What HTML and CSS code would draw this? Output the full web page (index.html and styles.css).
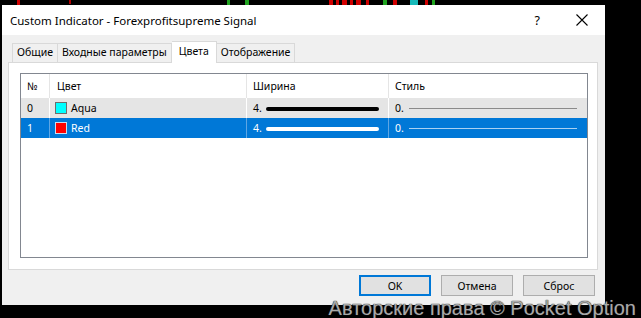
FILE: index.html
```html
<!DOCTYPE html>
<html lang="ru">
<head>
    <meta charset="UTF-8">
    <title>Custom Indicator - Forexprofitsupreme Signal</title>
    <link rel="stylesheet" href="styles.css">
</head>
<body>

    <div class="chart">
        <svg width="641" height="5" viewBox="0 0 641 5">
            <rect x="17" y="0" width="3" height="5" fill="#d00000"/>
            <rect x="69" y="0" width="2" height="4" fill="#b00000"/>
            <rect x="227" y="0" width="3" height="5" fill="#1fa31f"/>
            <rect x="245" y="0" width="4" height="5" fill="#1fa31f"/>
            <rect x="329" y="0" width="4" height="5" fill="#d00000"/>
            <rect x="336" y="0" width="3" height="5" fill="#d00000"/>
            <rect x="342" y="0" width="5" height="5" fill="#d00000"/>
            <rect x="350" y="0" width="3" height="5" fill="#d00000"/>
            <rect x="356" y="0" width="5" height="5" fill="#d00000"/>
            <rect x="366" y="0" width="3" height="5" fill="#d00000"/>
            <rect x="383" y="0" width="4" height="5" fill="#1fa31f"/>
            <rect x="393" y="0" width="4" height="5" fill="#d00000"/>
            <rect x="410" y="0" width="8" height="5" fill="#16b9b9"/>
            <rect x="425" y="0" width="3" height="5" fill="#d00000"/>
            <rect x="432" y="0" width="3" height="5" fill="#1fa31f"/>
        </svg>
    </div>

    <div class="desk">
        <div class="dialog">
            <div class="titlebar">
                <span class="title">Custom Indicator - Forexprofitsupreme Signal</span>
                <span class="help">?</span>
                <span class="close">
                    <svg width="12" height="12" viewBox="0 0 12 12">
                        <path d="M0.5 0.5 L11.5 11.5 M11.5 0.5 L0.5 11.5" stroke="#000" stroke-width="1.1" fill="none"/>
                    </svg>
                </span>
            </div>

            <div class="tabs">
                <div class="tab">Общие</div>
                <div class="tab">Входные параметры</div>
                <div class="tab active">Цвета</div>
                <div class="tab">Отображение</div>
            </div>

            <div class="panel">
                <div class="list">
                    <div class="row head">
                        <div class="cell">№</div>
                        <div class="cell">Цвет</div>
                        <div class="cell">Ширина</div>
                        <div class="cell">Стиль</div>
                    </div>
                    <div class="row hot">
                        <div class="cell">0</div>
                        <div class="cell"><span class="swatch aqua"></span>Aqua</div>
                        <div class="cell">4.<span class="thick"></span></div>
                        <div class="cell">0.<span class="thin"></span></div>
                    </div>
                    <div class="row selected">
                        <div class="cell">1</div>
                        <div class="cell"><span class="swatch red"></span>Red</div>
                        <div class="cell">4.<span class="thick"></span></div>
                        <div class="cell">0.<span class="thin"></span></div>
                    </div>
                </div>
            </div>

            <div class="buttons">
                <button type="button" class="default">OK</button>
                <button type="button">Отмена</button>
                <button type="button">Сброс</button>
            </div>
        </div>
    </div>

    <div class="watermark">Авторские права © Pocket Option</div>

</body>
</html>
```

FILE: styles.css
```css
* {
    box-sizing: border-box;
}

body {
    margin: 0;
    width: 641px;
    height: 318px;
    background-color: #000;
    font-family: 'Noto Sans', 'Open Sans', sans-serif;
    font-size: 10.5px;
    color: #000;
    position: relative;
    overflow: hidden;
}

.chart {
    height: 5px;
}

.chart svg {
    display: block;
}

.desk {
    padding-left: 2px;
}

.dialog {
    width: 603px;
    height: 300px;
    background-color: #f0f0f0;
    display: flex;
    flex-direction: column;
}

.titlebar {
    height: 30px;
    flex: none;
    background-color: #fff;
    display: flex;
    align-items: center;
    padding-left: 8px;
}

.title {
    flex: 1;
    font-size: 11.5px;
}

.help {
    font-size: 12.5px;
    margin-right: 36px;
}

.close {
    display: flex;
    margin-right: 17px;
}

.tabs {
    display: flex;
    flex: none;
    align-items: flex-end;
    height: 21px;
    margin-top: 6px;
    padding-left: 10px;
}

.tab {
    height: 19px;
    line-height: 17px;
    padding: 0 4px;
    border: 1px solid #d9d9d9;
    border-bottom: none;
    border-left: none;
    background-color: #f0f0f0;
    white-space: nowrap;
}

.tab:first-child {
    border-left: 1px solid #d9d9d9;
}

.tab.active {
    height: 22px;
    line-height: 18px;
    padding: 0 7px;
    background-color: #fff;
    margin-bottom: -1px;
    position: relative;
}

.panel {
    margin: 0 7px 0 6px;
    height: 208px;
    flex: none;
    background-color: #fff;
    border: 1px solid #d9d9d9;
    padding: 10px 9px 0 11px;
}

.list {
    height: 185px;
    border: 1px solid #828790;
    background-color: #fff;
}

.row {
    display: grid;
    grid-template-columns: 29px 197px 142px 1fr;
    height: 20px;
}

.cell {
    display: flex;
    align-items: center;
    padding-left: 6px;
    border-right: 1px solid #fff;
    white-space: nowrap;
}

.cell:last-child {
    border-right: none;
}

.row.head {
    height: 24px;
}

.row.head .cell {
    border-right-color: #e5e5e5;
}

.row.hot {
    background-color: #e5e5e5;
}

.row.selected {
    background-color: #0078d7;
    color: #fff;
}

.row.selected .cell {
    border-right-color: #5ea6e4;
}

.row .cell:nth-child(2) {
    padding-left: 5px;
}

.row.head .cell:nth-child(2) {
    padding-left: 7px;
}

.swatch {
    width: 12px;
    height: 12px;
    margin-right: 4px;
    border: 1px solid #6d6d6d;
}

.swatch.aqua {
    background-color: #00ffff;
}

.swatch.red {
    background-color: #ff0000;
    border-color: #c8dcf0;
}

.thick {
    flex: 1;
    height: 4px;
    border-radius: 2px;
    background-color: #000;
    margin: 1px 9px 0 4px;
}

.selected .thick {
    background-color: #fff;
}

.thin {
    flex: 1;
    height: 1px;
    background-color: #8a8a8a;
    margin: 1px 10px 0 5px;
}

.selected .thin {
    background-color: #a9d1f2;
}

.buttons {
    display: flex;
    justify-content: flex-end;
    gap: 10px;
    padding: 5px 10px 0 0;
}

button {
    width: 72px;
    height: 21px;
    font-family: inherit;
    font-size: 10.5px;
    color: #000;
    background-color: #e1e1e1;
    border: 1px solid #adadad;
    padding: 0;
}

button.default {
    border: 2px solid #0078d7;
}

.watermark {
    position: absolute;
    right: 5px;
    bottom: -1px;
    font-family: 'Liberation Sans', Arial, sans-serif;
    font-size: 20px;
    line-height: 22px;
    color: #a9a9a9;
    text-shadow: 0 0 1px #222, 0 0 1px #222;
    white-space: nowrap;
}
```
